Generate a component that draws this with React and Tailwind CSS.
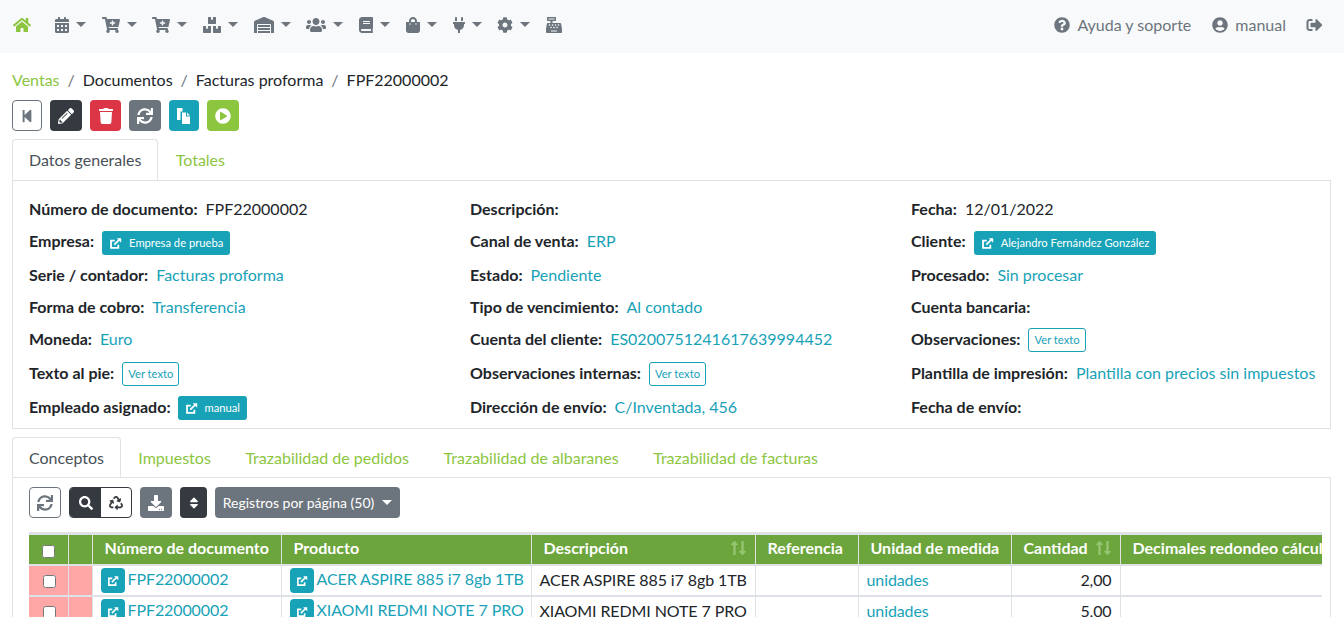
import {
  FaHome, FaCalendarAlt, FaCartPlus, FaBoxes, FaWarehouse, FaUsers, FaBook, FaShoppingBag, FaPlug, FaCog,
  FaCashRegister, FaQuestionCircle, FaUserCircle, FaSignOutAlt, FaStepBackward, FaPencilAlt, FaTrash, FaSync,
  FaPlayCircle, FaSearch, FaRecycle, FaDownload, FaSort, FaLongArrowAltUp, FaLongArrowAltDown,
} from "react-icons/fa";

const menu = [
  [FaCalendarAlt, "w-[14px]"],
  [FaCartPlus, "w-[18px]"],
  [FaCartPlus, "w-[18px]"],
  [FaBoxes, "w-[18px]"],
  [FaWarehouse, "w-[20px]"],
  [FaUsers, "w-[20px]"],
  [FaBook, "w-[14px]"],
  [FaShoppingBag, "w-[14px]"],
  [FaPlug, "w-[12px]"],
  [FaCog, "w-[16px]"],
];

function Caret({ className = "" }) {
  return <span className={`inline-block w-0 h-0 border-x-[5px] border-x-transparent border-t-[5px] border-t-current ${className}`} />;
}

// old style external link icon, a square with an arrow going out of it
function ExtIcon({ className = "" }) {
  return (
    <svg viewBox="0 0 16 16" className={className} fill="none">
      <path d="M11.5 9.5V13.5H2.5V4.5H7" stroke="currentColor" strokeWidth="2.2" />
      <path d="M6.5 9.5L12.5 3.5" stroke="currentColor" strokeWidth="2.2" />
      <path d="M9.5 1.5H15V7Z" fill="currentColor" />
    </svg>
  );
}

function CopyIcon({ className = "" }) {
  return (
    <svg viewBox="0 0 14 16" className={className} fill="currentColor">
      <path d="M0 0H5.5V3.5H3.5V12H0Z" />
      <path d="M5 4.5H9V8.5H13V16H5Z" />
      <path d="M10 4.5L13 7.5H10Z" />
    </svg>
  );
}

function Link({ children }) {
  return <span className="text-[#17a2b8]">{children}</span>;
}

function Badge({ children, className = "mt-[2px]" }) {
  return (
    <span className={`inline-flex items-center h-6 px-[7px] rounded-[3px] bg-[#17a2b8] text-white text-[11.2px] ${className}`}>
      <ExtIcon className="w-[13px] h-[13px] mr-[7px]" />
      {children}
    </span>
  );
}

function VerTexto() {
  return <span className="inline-flex items-center h-6 mt-px px-[5px] rounded-[3px] border border-[#17a2b8] text-[#17a2b8] text-[11.2px]">Ver texto</span>;
}

function Field({ label, children }) {
  return (
    <div className="flex items-start gap-2 leading-6 whitespace-nowrap">
      <b className="font-bold">{label}:</b>
      {children}
    </div>
  );
}

function ToolBtn({ className, children }) {
  return <span className={`flex items-center justify-center h-[31px] rounded-[4px] ${className}`}>{children}</span>;
}

function Tabs({ items, className = "h-[41px]" }) {
  return (
    <div className={`flex border-b border-[#dee2e6] ${className}`}>
      {items.map((t, i) => (
        <span
          key={t}
          className={
            i === 0
              ? "px-4 pt-[8px] h-full leading-6 border border-[#dee2e6] border-b-white bg-white rounded-t-[4px] text-[#495057] whitespace-nowrap"
              : "px-4 pt-[9px] mx-[1.3px] leading-6 text-[#8cc63f] whitespace-nowrap"
          }
        >
          {t}
        </span>
      ))}
    </div>
  );
}

function OpenIcon() {
  return (
    <span className="inline-flex items-center justify-center w-6 h-[25px] mr-[3px] rounded-[4px] bg-[#17a2b8] text-white align-middle">
      <ExtIcon className="w-3 h-3" />
    </span>
  );
}

function Row({ product, qty }) {
  return (
    <tr className="h-[31px] border-b-2 border-[#dee2e6]">
      <td className="bg-[#ffa6a6] border-r border-[#dee2e6] text-center pl-[3px]">
        <input type="checkbox" className="w-[13px] h-[13px] align-middle" readOnly />
      </td>
      <td className="bg-[#ffa6a6] border-r border-[#dee2e6]" />
      <td className="pl-2 border-r border-[#dee2e6]"><OpenIcon /><Link>FPF22000002</Link></td>
      <td className="pl-2 border-r border-[#dee2e6]"><OpenIcon /><Link>{product}</Link></td>
      <td className="pl-2 border-r border-[#dee2e6]">{product}</td>
      <td className="border-r border-[#dee2e6]" />
      <td className="pl-2 border-r border-[#dee2e6]"><Link>unidades</Link></td>
      <td className="pr-2 text-right border-r border-[#dee2e6]">{qty}</td>
      <td />
    </tr>
  );
}

function Th({ children, sort }) {
  return (
    <th className="relative px-3 pb-[2px] text-left font-bold border-r border-[#dee2e6] whitespace-nowrap overflow-hidden">
      {children}
      {sort && (
        <span className="absolute right-2 top-[5px] flex text-[#94c46f]">
          <FaLongArrowAltUp className="w-[9px] h-4 -mr-px" />
          <FaLongArrowAltDown className="w-[9px] h-4" />
        </span>
      )}
    </th>
  );
}

export default function App() {
  return (
    <div className="h-[617px] overflow-hidden bg-white text-[16px] text-[#212529] font-['Lato','Open_Sans',sans-serif]">
      <nav className="flex items-center justify-between h-[53px] pb-1 pl-[13px] pr-[21px] bg-[#f8f9fa] text-[#6c757d]">
        <div className="flex items-center">
          <FaHome className="w-[18px] h-[16px] mr-[24px] text-[#8cc63f]" />
          {menu.map(([Icon, w], i) => (
            <span key={i} className="flex items-center mr-[15.7px]">
              <Icon className={`${w} h-[16px] mr-[7px]`} />
              <Caret />
            </span>
          ))}
          <FaCashRegister className="w-[16px] h-[16px]" />
        </div>
        <div className="flex items-center">
          <FaQuestionCircle className="w-4 h-4 mr-[7px]" />
          <span>Ayuda y soporte</span>
          <FaUserCircle className="w-4 h-4 ml-[21px] mr-[7px]" />
          <span>manual</span>
          <FaSignOutAlt className="w-[17px] h-4 ml-[20px]" />
        </div>
      </nav>

      <div className="pl-3 pr-[13px]">
        <div className="flex items-center h-6 mt-[15px] leading-6">
          <span className="text-[#8cc63f]">Ventas</span>
          <span className="mx-2 text-[#6c757d]">/</span>
          <span>Documentos</span>
          <span className="mx-2 text-[#6c757d]">/</span>
          <span>Facturas proforma</span>
          <span className="mx-2 text-[#6c757d]">/</span>
          <span>FPF22000002</span>
        </div>

        <div className="flex gap-2 mt-[8px] mb-[8px]">
          <ToolBtn className="w-[30px] border border-[#6c757d] text-[#6c757d]"><FaStepBackward className="w-[14px] h-[14px]" /></ToolBtn>
          <ToolBtn className="w-[32px] bg-[#343a40] text-white"><FaPencilAlt className="w-4 h-4" /></ToolBtn>
          <ToolBtn className="w-[31px] bg-[#dc3545] text-white"><FaTrash className="w-[14px] h-4" /></ToolBtn>
          <ToolBtn className="w-[32px] bg-[#6c757d] text-white"><FaSync className="w-4 h-4" /></ToolBtn>
          <ToolBtn className="w-[30px] bg-[#17a2b8] text-white"><CopyIcon className="w-[14px] h-4" /></ToolBtn>
          <ToolBtn className="w-[32px] bg-[#8cc63f] text-white"><FaPlayCircle className="w-4 h-4" /></ToolBtn>
        </div>

        <Tabs items={["Datos generales", "Totales"]} className="h-[42px]" />
        <div className="grid grid-cols-[441px_441px_1fr] grid-rows-[32px_34px_32px_32px_34px_34px_34px] pt-4 pl-4 border-x border-b border-[#dee2e6] h-[248px]">
          <Field label="Número de documento"><span>FPF22000002</span></Field>
          <Field label="Descripción" />
          <Field label="Fecha"><span>12/01/2022</span></Field>

          <Field label="Empresa"><Badge>Empresa de prueba</Badge></Field>
          <Field label="Canal de venta"><Link>ERP</Link></Field>
          <Field label="Cliente"><Badge>Alejandro Fernández González</Badge></Field>

          <Field label="Serie / contador"><Link>Facturas proforma</Link></Field>
          <Field label="Estado"><Link>Pendiente</Link></Field>
          <Field label="Procesado"><Link>Sin procesar</Link></Field>

          <Field label="Forma de cobro"><Link>Transferencia</Link></Field>
          <Field label="Tipo de vencimiento"><Link>Al contado</Link></Field>
          <Field label="Cuenta bancaria" />

          <Field label="Moneda"><Link>Euro</Link></Field>
          <Field label="Cuenta del cliente"><Link>ES0200751241617639994452</Link></Field>
          <Field label="Observaciones"><VerTexto /></Field>

          <Field label="Texto al pie"><VerTexto /></Field>
          <Field label="Observaciones internas"><VerTexto /></Field>
          <Field label="Plantilla de impresión"><Link>Plantilla con precios sin impuestos</Link></Field>

          <Field label="Empleado asignado"><Badge className="mt-px -ml-px">manual</Badge></Field>
          <Field label="Dirección de envío"><Link>C/Inventada, 456</Link></Field>
          <Field label="Fecha de envío" />
        </div>

        <div className="mt-2">
          <Tabs items={["Conceptos", "Impuestos", "Trazabilidad de pedidos", "Trazabilidad de albaranes", "Trazabilidad de facturas"]} />
        </div>
        <div className="pt-[9px] pl-4 pr-2 border-x border-[#dee2e6] h-[200px]">
          <div className="flex gap-2">
            <ToolBtn className="w-8 border border-[#6c757d] text-[#6c757d]"><FaSync className="w-4 h-4" /></ToolBtn>
            <div className="flex h-[31px] rounded-[4px] border border-[#343a40] overflow-hidden">
              <span className="flex items-center justify-center w-[31px] bg-[#343a40] text-white"><FaSearch className="w-[14px] h-[14px]" /></span>
              <span className="flex items-center justify-center w-[30px] text-[#343a40]"><FaRecycle className="w-[14px] h-[14px]" /></span>
            </div>
            <ToolBtn className="w-8 bg-[#6c757d] text-white"><FaDownload className="w-4 h-4" /></ToolBtn>
            <ToolBtn className="w-[27px] bg-[#343a40] text-white"><FaSort className="w-[14px] h-[14px]" /></ToolBtn>
            <ToolBtn className="w-[185px] bg-[#6c757d] text-white text-[14px]">
              Registros por página (50)
              <Caret className="ml-2" />
            </ToolBtn>
          </div>

          <div className="mt-[14px] w-[1293px] overflow-hidden">
            <table className="table-fixed w-[1500px] border-collapse">
              <colgroup>
                <col className="w-[39px]" />
                <col className="w-[24px]" />
                <col className="w-[189px]" />
                <col className="w-[250px]" />
                <col className="w-[224px]" />
                <col className="w-[103px]" />
                <col className="w-[153px]" />
                <col className="w-[109px]" />
                <col />
              </colgroup>
              <thead>
                <tr className="h-[31px] bg-[#6ba53c] text-white border-t-[3px] border-b-2 border-[#dee2e6]">
                  <th className="text-center border-r border-[#dee2e6]">
                    <input type="checkbox" className="w-[13px] h-[13px] align-middle" readOnly />
                  </th>
                  <th className="border-r border-[#dee2e6]" />
                  <Th>Número de documento</Th>
                  <Th>Producto</Th>
                  <Th sort>Descripción</Th>
                  <Th>Referencia</Th>
                  <Th>Unidad de medida</Th>
                  <Th sort>Cantidad</Th>
                  <Th>Decimales redondeo cálculo</Th>
                </tr>
              </thead>
              <tbody className="whitespace-nowrap tracking-[-0.1px]">
                <Row product="ACER ASPIRE 885 i7 8gb 1TB" qty="2,00" />
                <Row product="XIAOMI REDMI NOTE 7 PRO" qty="5,00" />
              </tbody>
            </table>
          </div>
        </div>
      </div>
    </div>
  );
}
